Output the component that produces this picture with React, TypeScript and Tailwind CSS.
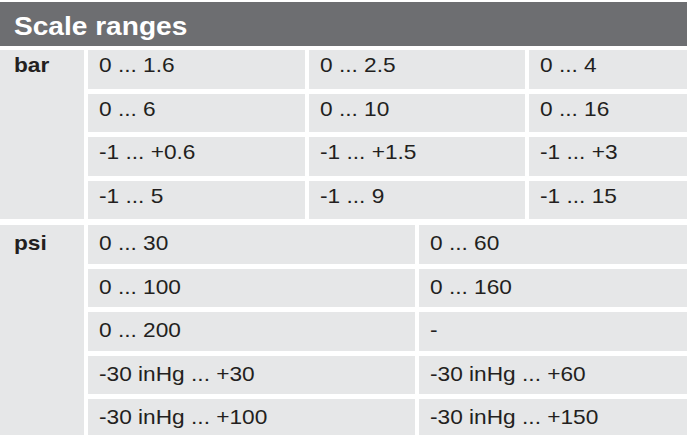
import React from "react";

const T = ({ children }: { children: React.ReactNode }) => (
  <span className="inline-block whitespace-nowrap origin-left scale-x-[1.08]">{children}</span>
);

const Cell = ({ children, psi }: { children: React.ReactNode; psi?: boolean }) => (
  <div
    className={
      psi
        ? "bg-[#e6e7e8] h-[38.5px] pl-[11px] pt-[6px] text-[21px] leading-[24px] text-[#231f20]"
        : "bg-[#e6e7e8] h-[38.5px] pl-[11px] pt-[3px] text-[21px] leading-[24px] text-[#231f20]"
    }
  >
    <T>{children}</T>
  </div>
);

export default function App() {
  const bar = [
    ["0 ... 1.6", "0 ... 2.5", "0 ... 4"],
    ["0 ... 6", "0 ... 10", "0 ... 16"],
    ["-1 ... +0.6", "-1 ... +1.5", "-1 ... +3"],
    ["-1 ... 5", "-1 ... 9", "-1 ... 15"],
  ];
  const psi = [
    ["0 ... 30", "0 ... 60"],
    ["0 ... 100", "0 ... 160"],
    ["0 ... 200", "-"],
    ["-30 inHg ... +30", "-30 inHg ... +60"],
    ["-30 inHg ... +100", "-30 inHg ... +150"],
  ];
  return (
    <div
      className="w-[687px] h-[435px] bg-white pt-[2px] overflow-hidden flex flex-col gap-[4px]"
      style={{ fontFamily: '"Liberation Sans", Arial, sans-serif' }}
    >
      <div className="h-[44px] shrink-0 bg-[#6d6e71] pl-[14px] pt-[10px] text-white font-bold text-[26px] leading-[28px]">
        <T>Scale ranges</T>
      </div>
      <div className="grid grid-cols-[84px_217px_216px_1fr] gap-x-[4px] gap-y-[5px] shrink-0">
        <div className="row-span-4 bg-[#e6e7e8] pl-[14px] pt-[3px] text-[21px] leading-[24px] font-bold text-[#231f20]">
          <T>bar</T>
        </div>
        {bar.map((r, i) => r.map((c, j) => <Cell key={i + "-" + j}>{c}</Cell>))}
      </div>
      <div className="grid grid-cols-[84px_327px_1fr] gap-x-[4px] gap-y-[5px] shrink-0 mt-[2px]">
        <div className="row-span-5 bg-[#e6e7e8] pl-[14px] pt-[6px] text-[21px] leading-[24px] font-bold text-[#231f20]">
          <T>psi</T>
        </div>
        {psi.map((r, i) =>
          r.map((c, j) => (
            <Cell key={i + "-" + j} psi>
              {c}
            </Cell>
          ))
        )}
      </div>
    </div>
  );
}
